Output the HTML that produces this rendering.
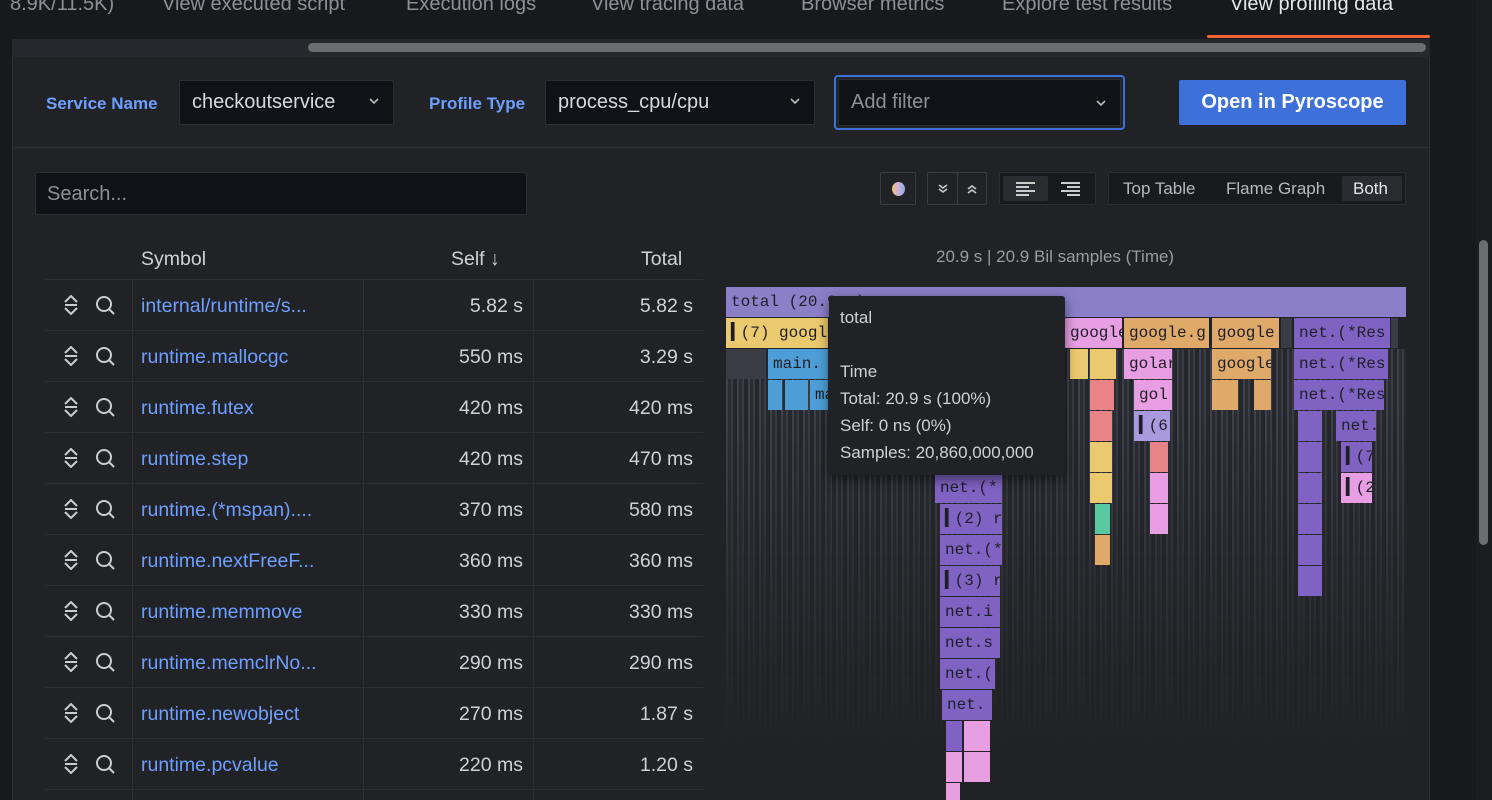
<!DOCTYPE html>
<html><head><meta charset="utf-8"><style>
*{margin:0;padding:0;box-sizing:border-box}
html,body{width:1492px;height:800px;overflow:hidden}
body{background:#18191d;font-family:"Liberation Sans",sans-serif;position:relative;color:#ccccdc}
.a{position:absolute}
.tab{position:absolute;font-size:20px;color:#8e9099;line-height:26px;top:-9px}
.panel{position:absolute;left:12px;top:57px;width:1418px;height:743px;background:#202226;border-left:1px solid #2c2e33;border-right:1px solid #2c2e33}
.lbl{position:absolute;font-size:17px;color:#6e9fff;font-weight:bold}
.sel{position:absolute;background:#111217;border:1px solid #2c2e33;border-radius:2px;font-size:20px;color:#d8d9e0;padding-left:12px;line-height:43px}
.chev{position:absolute;right:14px;top:17px}
.row{position:absolute;left:45px;width:658px;height:51px;border-top:1px solid #2c2e33;font-size:19.5px}
.sym{position:absolute;left:96px;top:15px;color:#6e9fff}
.num{position:absolute;top:15px;color:#d0d1d8;text-align:right}
.ic{position:absolute;left:18px;top:15px}
.b{position:absolute;height:30px;font-family:"Liberation Mono",monospace;font-size:16px;color:#1e1f26;line-height:30px;padding-left:5px;overflow:hidden;white-space:nowrap}
.P{background:#7f62c2}.Y{background:#ebc96e}.BL{background:#4d9ed6}.PK{background:#e79ee2}.O{background:#dfa96a}.R{background:#e88388}.G{background:#5ac8a0}.L{background:#a99ae0}.GR{background:#3a3c45}
</style></head><body>
<svg width="0" height="0" style="position:absolute"><defs>
<g id="ud"><path d="M2 7 L8 1 L14 7 M2 10 L14 10 M2 13 L8 19 L14 13" fill="none" stroke="#ccc" stroke-width="2"/></g>
<g id="mg"><circle cx="8" cy="8" r="7" fill="none" stroke="#ccc" stroke-width="2"/><path d="M13 13 L18 18" stroke="#ccc" stroke-width="2"/></g>
<g id="cv"><path d="M1 1 L5 5 L9 1" fill="none" stroke="#bbb" stroke-width="1.6"/></g>
</defs></svg>
<div class="tab" style="left:10px">8.9K/11.5K)</div>
<div class="tab" style="left:162px">View executed script</div>
<div class="tab" style="left:406px">Execution logs</div>
<div class="tab" style="left:591px">View tracing data</div>
<div class="tab" style="left:801px">Browser metrics</div>
<div class="tab" style="left:1002px">Explore test results</div>
<div class="tab" style="left:1230px;color:#e6e7ec">View profiling data</div>
<div class="a" style="left:1207px;top:35px;width:223px;height:3px;background:#f56431;border-radius:2px"></div>
<div class="a" style="left:12px;top:39px;width:1418px;height:18px;background:#26282d"></div>
<div class="a" style="left:308px;top:43px;width:1118px;height:9px;background:#6c6d70;border-radius:5px"></div>
<div class="a" style="left:1476px;top:0;width:16px;height:800px;background:#1c1d21"></div>
<div class="a" style="left:1479px;top:240px;width:9px;height:305px;background:#6c6d70;border-radius:5px"></div>

<div class="panel">
<div class="a" style="left:-1px;top:90px;width:1418px;height:1px;background:#2c2e33"></div>
</div>
<div class="lbl" style="left:46px;top:94px">Service Name</div>
<div class="sel" style="left:179px;top:80px;width:215px;height:45px">checkoutservice<svg class="chev" width="10" height="7"><use href="#cv"/></svg></div>
<div class="lbl" style="left:429px;top:94px">Profile Type</div>
<div class="sel" style="left:545px;top:80px;width:270px;height:45px">process_cpu/cpu<svg class="chev" width="10" height="7"><use href="#cv"/></svg></div>
<div class="a" style="left:834px;top:75px;width:291px;height:55px;border:2px solid #3d71d9;border-radius:4px"></div>
<div class="sel" style="left:838px;top:79px;width:283px;height:47px;color:#8e9099;line-height:45px">Add filter<svg class="chev" width="10" height="7" style="top:20px"><use href="#cv"/></svg></div>
<div class="a" style="left:1179px;top:80px;width:227px;height:45px;background:#3d71d9;border-radius:2px;color:#fff;font-size:20px;font-weight:bold;text-align:center;line-height:45px">Open in Pyroscope</div>

<div class="a" style="left:35px;top:172px;width:492px;height:43px;background:#111217;border:1px solid #2c2e33;border-radius:2px;font-size:20px;color:#8e9099;padding-left:11px;line-height:42px">Search...</div>

<div class="a" style="left:880px;top:172px;width:36px;height:33px;border:1px solid #3b3d44;border-radius:2px"><div class="a" style="left:11px;top:9px;width:13px;height:14px;border-radius:50%;background:linear-gradient(90deg,#f0c070,#d0b0e0,#80b0e0)"></div></div>
<div class="a" style="left:927px;top:172px;width:60px;height:33px;border:1px solid #3b3d44;border-radius:2px">
<svg class="a" style="left:10px;top:11px" width="10" height="10"><path d="M1 1 L5 4 L9 1 M1 5 L5 8 L9 5" fill="none" stroke="#ccc" stroke-width="1.6"/></svg>
<div class="a" style="left:29px;top:0;width:1px;height:31px;background:#3b3d44"></div>
<svg class="a" style="left:39px;top:11px" width="10" height="10"><path d="M1 5 L5 2 L9 5 M1 9 L5 6 L9 9" fill="none" stroke="#ccc" stroke-width="1.6"/></svg></div>
<div class="a" style="left:999px;top:172px;width:97px;height:33px;border:1px solid #2c2e33;border-radius:2px;background:#181a1e"><div class="a" style="left:3px;top:3px;width:45px;height:25px;background:#2a2c31;border-radius:2px"></div>
<svg class="a" style="left:16px;top:9px" width="20" height="14"><path d="M0 1H19M0 5H13M0 9H19M0 13H13" stroke="#ccc" stroke-width="2"/></svg>
<svg class="a" style="left:61px;top:9px" width="20" height="14"><path d="M0 1H19M6 5H19M0 9H19M6 13H19" stroke="#ccc" stroke-width="2"/></svg></div>
<div class="a" style="left:1108px;top:172px;width:298px;height:33px;border:1px solid #2c2e33;border-radius:2px;background:#181a1e;font-size:17px;color:#b8b9c0;line-height:31px">
<span class="a" style="left:14px">Top Table</span><span class="a" style="left:117px">Flame Graph</span>
<div class="a" style="left:233px;top:3px;width:60px;height:25px;background:#2a2c31;border-radius:2px"></div><span class="a" style="left:244px;color:#e6e7ec">Both</span></div>

<div class="a" style="left:141px;top:248px;font-size:19.5px;color:#d0d1d8">Symbol</div>
<div class="a" style="left:451px;top:248px;font-size:19.5px;color:#d0d1d8">Self &#8595;</div>
<div class="a" style="left:641px;top:248px;font-size:19.5px;color:#d0d1d8">Total</div>
<div class="a" style="left:132px;top:280px;width:1px;height:520px;background:#2c2e33"></div>
<div class="a" style="left:363px;top:280px;width:1px;height:520px;background:#2c2e33"></div>
<div class="a" style="left:533px;top:280px;width:1px;height:520px;background:#2c2e33"></div>

<div class="row" style="top:279px"><svg class="ic" width="16" height="20"><use href="#ud"/></svg><svg class="ic" style="left:51px;top:16px" width="20" height="20"><use href="#mg"/></svg><span class="sym">internal/runtime/s...</span><span class="num" style="right:180px">5.82 s</span><span class="num" style="right:10px">5.82 s</span></div>
<div class="row" style="top:330px"><svg class="ic" width="16" height="20"><use href="#ud"/></svg><svg class="ic" style="left:51px;top:16px" width="20" height="20"><use href="#mg"/></svg><span class="sym">runtime.mallocgc</span><span class="num" style="right:180px">550 ms</span><span class="num" style="right:10px">3.29 s</span></div>
<div class="row" style="top:381px"><svg class="ic" width="16" height="20"><use href="#ud"/></svg><svg class="ic" style="left:51px;top:16px" width="20" height="20"><use href="#mg"/></svg><span class="sym">runtime.futex</span><span class="num" style="right:180px">420 ms</span><span class="num" style="right:10px">420 ms</span></div>
<div class="row" style="top:432px"><svg class="ic" width="16" height="20"><use href="#ud"/></svg><svg class="ic" style="left:51px;top:16px" width="20" height="20"><use href="#mg"/></svg><span class="sym">runtime.step</span><span class="num" style="right:180px">420 ms</span><span class="num" style="right:10px">470 ms</span></div>
<div class="row" style="top:483px"><svg class="ic" width="16" height="20"><use href="#ud"/></svg><svg class="ic" style="left:51px;top:16px" width="20" height="20"><use href="#mg"/></svg><span class="sym">runtime.(*mspan)....</span><span class="num" style="right:180px">370 ms</span><span class="num" style="right:10px">580 ms</span></div>
<div class="row" style="top:534px"><svg class="ic" width="16" height="20"><use href="#ud"/></svg><svg class="ic" style="left:51px;top:16px" width="20" height="20"><use href="#mg"/></svg><span class="sym">runtime.nextFreeF...</span><span class="num" style="right:180px">360 ms</span><span class="num" style="right:10px">360 ms</span></div>
<div class="row" style="top:585px"><svg class="ic" width="16" height="20"><use href="#ud"/></svg><svg class="ic" style="left:51px;top:16px" width="20" height="20"><use href="#mg"/></svg><span class="sym">runtime.memmove</span><span class="num" style="right:180px">330 ms</span><span class="num" style="right:10px">330 ms</span></div>
<div class="row" style="top:636px"><svg class="ic" width="16" height="20"><use href="#ud"/></svg><svg class="ic" style="left:51px;top:16px" width="20" height="20"><use href="#mg"/></svg><span class="sym">runtime.memclrNo...</span><span class="num" style="right:180px">290 ms</span><span class="num" style="right:10px">290 ms</span></div>
<div class="row" style="top:687px"><svg class="ic" width="16" height="20"><use href="#ud"/></svg><svg class="ic" style="left:51px;top:16px" width="20" height="20"><use href="#mg"/></svg><span class="sym">runtime.newobject</span><span class="num" style="right:180px">270 ms</span><span class="num" style="right:10px">1.87 s</span></div>
<div class="row" style="top:738px"><svg class="ic" width="16" height="20"><use href="#ud"/></svg><svg class="ic" style="left:51px;top:16px" width="20" height="20"><use href="#mg"/></svg><span class="sym">runtime.pcvalue</span><span class="num" style="right:180px">220 ms</span><span class="num" style="right:10px">1.20 s</span></div>
<div class="a" style="left:45px;top:789px;width:658px;height:1px;background:#2c2e33"></div>

<div class="a" style="left:936px;top:247px;font-size:17px;color:#9a9ba3">20.9 s | 20.9 Bil samples (Time)</div>

<div class="a" style="left:726px;top:349px;width:680px;height:420px;background:repeating-linear-gradient(90deg,#40424b 0 2px,#2a2c32 2px 5px,#3a3c44 5px 7px,#25272c 7px 11px);-webkit-mask-image:linear-gradient(#000 15%,rgba(0,0,0,.6) 45%,transparent 95%);mask-image:linear-gradient(#000 15%,rgba(0,0,0,.6) 45%,transparent 95%)"></div>

<div class="b" style="left:726px;top:287px;width:680px;background:#8b7fc8">total (20.9 s)</div>
<div class="b Y" style="left:726px;top:318px;width:102px">&#9613;(7) google</div>
<div class="b PK" style="left:1065px;top:318px;width:57px">google</div>
<div class="b O" style="left:1124px;top:318px;width:85px">google.g</div>
<div class="b O" style="left:1212px;top:318px;width:67px">google</div>
<div class="b GR" style="left:1281px;top:318px;width:11px"></div>
<div class="b P" style="left:1294px;top:318px;width:96px">net.(*Res</div>
<div class="b GR" style="left:1391px;top:318px;width:7px"></div>
<div class="b GR" style="left:726px;top:349px;width:40px"></div>
<div class="b BL" style="left:768px;top:349px;width:60px">main.</div>
<div class="b Y" style="left:1070px;top:349px;width:18px"></div>
<div class="b Y" style="left:1090px;top:349px;width:26px"></div>
<div class="b PK" style="left:1124px;top:349px;width:48px">golar</div>
<div class="b O" style="left:1212px;top:349px;width:59px">google</div>
<div class="b P" style="left:1294px;top:349px;width:94px">net.(*Res</div>
<div class="b BL" style="left:768px;top:380px;width:14px"></div>
<div class="b BL" style="left:785px;top:380px;width:23px"></div>
<div class="b BL" style="left:810px;top:380px;width:18px">ma</div>
<div class="b R" style="left:1090px;top:380px;width:24px"></div>
<div class="b PK" style="left:1134px;top:380px;width:38px">gol</div>
<div class="b O" style="left:1212px;top:380px;width:26px"></div>
<div class="b O" style="left:1254px;top:380px;width:17px"></div>
<div class="b P" style="left:1294px;top:380px;width:90px">net.(*Res</div>
<div class="b R" style="left:1090px;top:411px;width:22px"></div>
<div class="b L" style="left:1134px;top:411px;width:36px">&#9613;(6</div>
<div class="b P" style="left:1298px;top:411px;width:24px"></div>
<div class="b P" style="left:1336px;top:411px;width:40px">net.</div>
<div class="b Y" style="left:1090px;top:442px;width:22px"></div>
<div class="b R" style="left:1150px;top:442px;width:18px"></div>
<div class="b P" style="left:1298px;top:442px;width:24px"></div>
<div class="b P" style="left:1341px;top:442px;width:31px">&#9613;(7</div>
<div class="b P" style="left:935px;top:473px;width:67px">net.(*</div>
<div class="b Y" style="left:1090px;top:473px;width:22px"></div>
<div class="b PK" style="left:1150px;top:473px;width:18px"></div>
<div class="b P" style="left:1298px;top:473px;width:24px"></div>
<div class="b PK" style="left:1341px;top:473px;width:31px">&#9613;(2</div>
<div class="b P" style="left:940px;top:504px;width:62px">&#9613;(2) r</div>
<div class="b G" style="left:1095px;top:504px;width:15px"></div>
<div class="b PK" style="left:1150px;top:504px;width:18px"></div>
<div class="b P" style="left:1298px;top:504px;width:24px"></div>
<div class="b P" style="left:940px;top:535px;width:62px">net.(*</div>
<div class="b O" style="left:1095px;top:535px;width:15px"></div>
<div class="b P" style="left:1298px;top:535px;width:24px"></div>
<div class="b P" style="left:940px;top:566px;width:60px">&#9613;(3) r</div>
<div class="b P" style="left:1298px;top:566px;width:24px"></div>
<div class="b P" style="left:940px;top:597px;width:60px">net.i</div>
<div class="b P" style="left:940px;top:628px;width:60px">net.s</div>
<div class="b P" style="left:940px;top:659px;width:55px">net.(</div>
<div class="b P" style="left:942px;top:690px;width:50px">net.</div>
<div class="b P" style="left:946px;top:721px;width:16px"></div>
<div class="b PK" style="left:964px;top:721px;width:26px"></div>
<div class="b PK" style="left:946px;top:752px;width:16px"></div>
<div class="b PK" style="left:964px;top:752px;width:26px"></div>
<div class="b PK" style="left:946px;top:783px;width:14px;height:17px"></div>

<div class="a" style="left:829px;top:296px;width:236px;height:179px;background:#202226;border-radius:3px;box-shadow:0 4px 12px rgba(0,0,0,.5);font-size:17px;color:#d0d1d8;line-height:27px;padding:8px 11px">total<br><br>Time<br>Total: 20.9 s (100%)<br>Self: 0 ns (0%)<br>Samples: 20,860,000,000</div>
</body></html>
